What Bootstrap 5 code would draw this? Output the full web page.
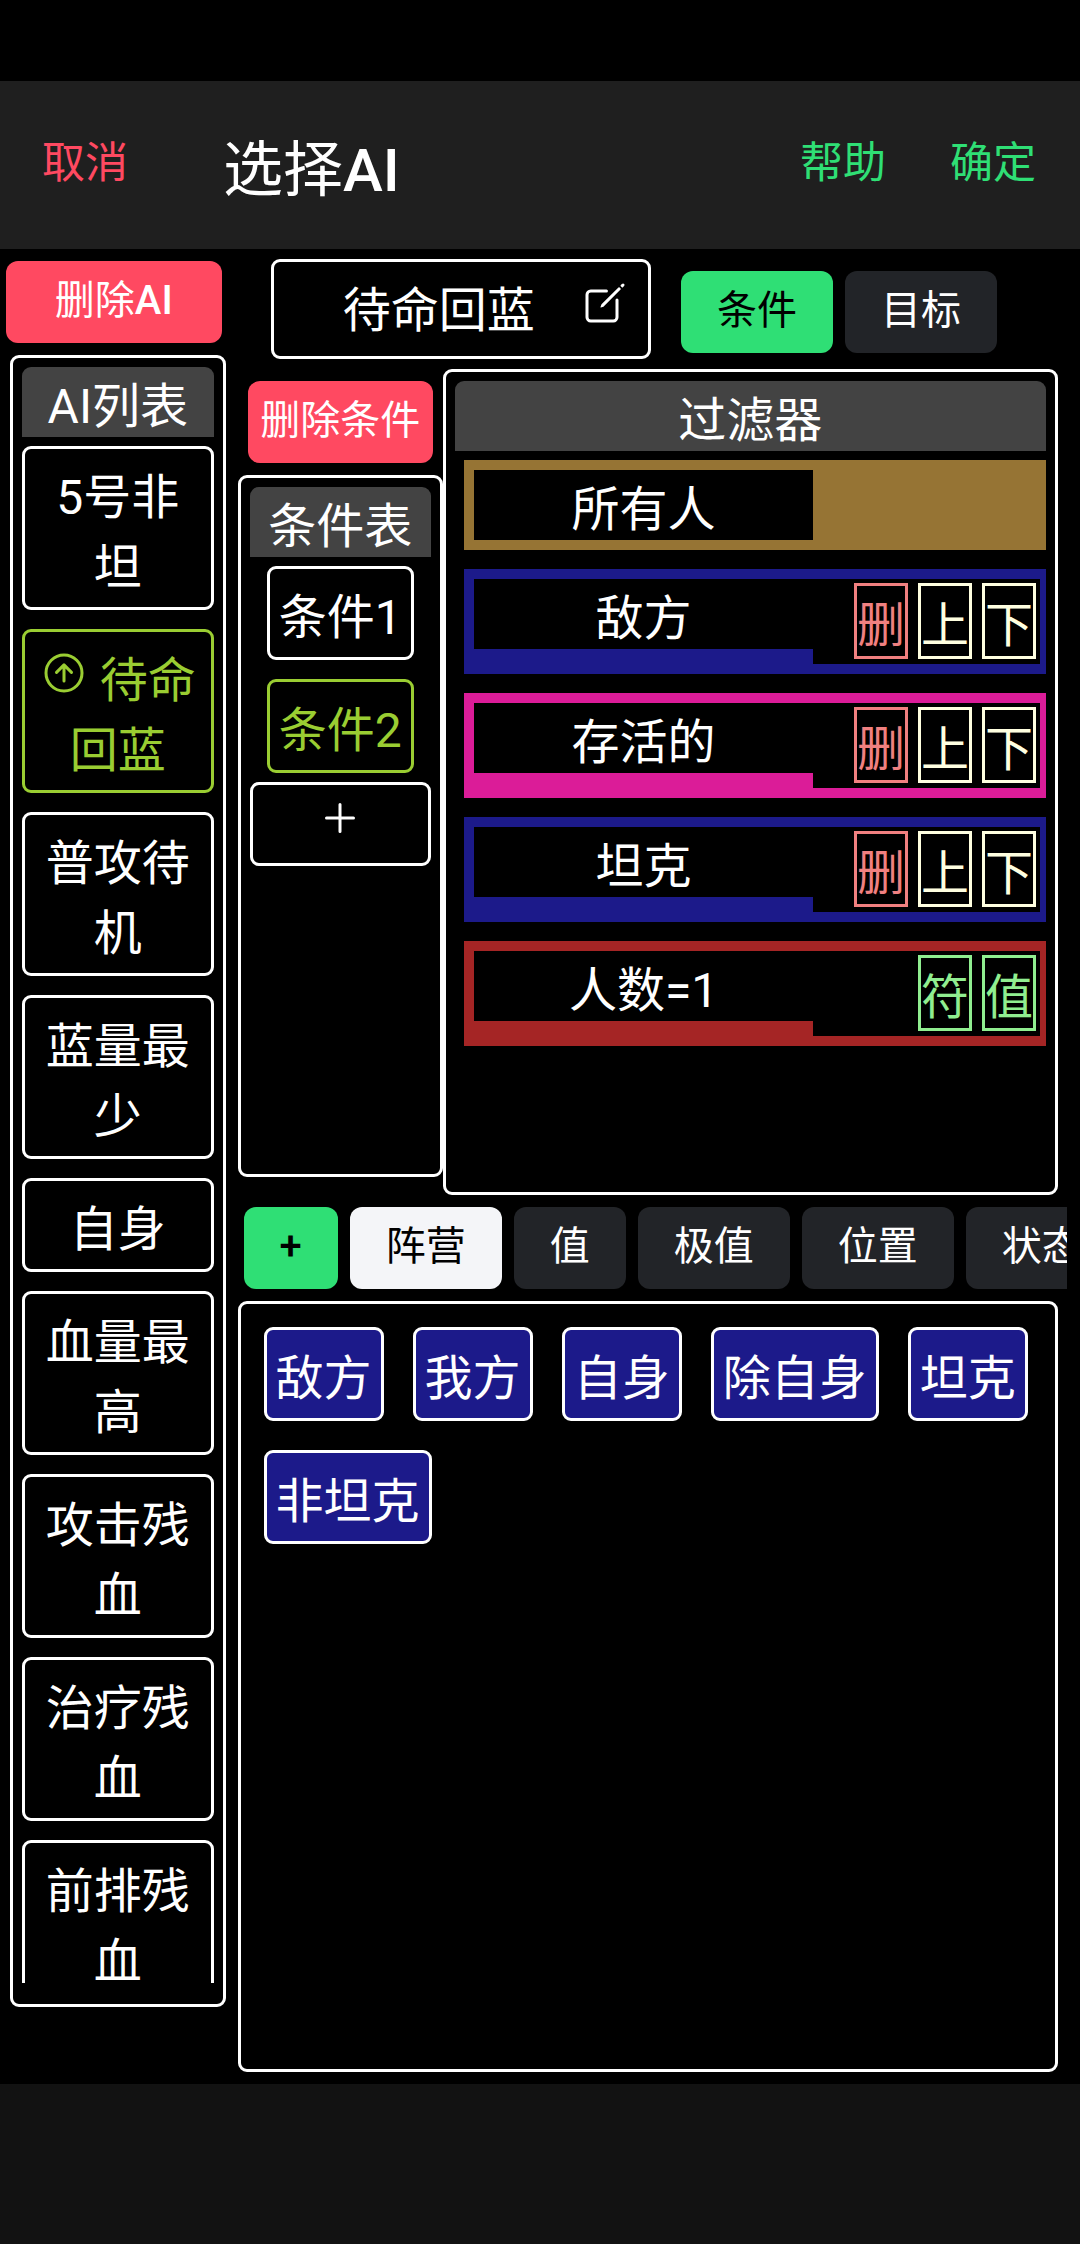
<!DOCTYPE html>
<html lang="zh-CN">
<head>
<meta charset="utf-8">
<meta name="viewport" content="width=device-width, initial-scale=1">
<title>选择AI</title>
<link href="https://cdn.jsdelivr.net/npm/bootstrap@5.3.0/dist/css/bootstrap.min.css" rel="stylesheet">
<script src="https://cdn.jsdelivr.net/npm/bootstrap@5.3.0/dist/js/bootstrap.bundle.min.js" defer></script>
<style>
  body { background: #000; color: #fff; font-family: Roboto, "Noto Sans CJK SC", sans-serif; font-size: 48px; line-height: normal; }
  .status-strip { height: 81px; }
  .top-bar { background: #1f1f1f; height: 168px; padding: 0 44px 0 42px; }
  .top-bar h1 { font-size: 60px; line-height: normal; margin-left: 95px; padding-bottom: 2px; }
  .bar-actions { gap: 64px; }
  .bar-link { --bs-btn-padding-x: 0px; --bs-btn-padding-y: 0px; --bs-btn-font-size: 43px; --bs-btn-border-width: 0px; line-height: 50px; margin-bottom: 4px; }
  .tint-danger, .tint-danger:hover { color: #ff4961; }
  .tint-success, .tint-success:hover { color: #2fdf75; }
  .latin-strong { font-weight: 500; }
  .bottom-strip { background: #121212; height: 160px; }

  .solid-btn { --bs-btn-padding-x: 36px; --bs-btn-padding-y: 0px; --bs-btn-font-size: 40px; --bs-btn-border-width: 0px; --bs-btn-border-radius: 12px; height: 82px; padding-bottom: 3px; flex-shrink: 0; white-space: nowrap; color: #fff; }
  .solid-red, .solid-red:hover { background: #ff4961; color: #fff; }
  .solid-green, .solid-green:hover { background: #2fdf75; color: #000; }
  .solid-light, .solid-light:hover { background: #f4f5f8; color: #000; }
  .solid-dark, .solid-dark:hover { background: #222428; color: #fff; }
  .narrow-btn { --bs-btn-padding-x: 8px; }

  .frame { border: 3px solid #fff; border-radius: 9px; }
  .frame-btn { display: block; background: #000; color: #fff; padding: 9px; line-height: normal; text-align: center; }
  .frame-btn.is-chosen { border-color: #9acd32; color: #9acd32; }
  .panel-title { background: #434343; border-radius: 9px 9px 0 0; font-size: 48px; font-weight: 400; line-height: normal; margin: 0 0 9px; text-align: center; flex-shrink: 0; }
  .ion { width: 48px; height: 48px; fill: none; stroke: currentColor; stroke-width: 32; stroke-linecap: round; stroke-linejoin: round; vertical-align: baseline; }
  .item-stack { gap: 19px; }

  .side-col { flex: 0 0 22%; padding: 12px 12px 0 10px; }
  .side-col > .solid-btn { margin: 0 4px 12px -4px; }
  .ai-panel { height: calc(100vh - 592px); padding: 9px 9px 21px; }
  .main-col { min-width: 0; padding: 10px 0 12px; }
  .name-row { padding-left: 33px; gap: 30px; margin-bottom: 10px; }
  .name-btn { width: 47%; height: 100px; padding: 9px 19px 9px 23px; }
  .mode-tabs { margin-top: 12px; }
  .tabs-gap { gap: 12px; }
  .work-row { margin-right: 22px; min-height: 826px; }
  .cond-col { flex: 0 0 25%; padding: 12px 0 18px; }
  .cond-col > .solid-btn { margin: 0 10px 12px; }
  .inner-pad { padding: 9px; }
  .add-cond { margin-top: 9px; padding-bottom: 21px; }

  .rule-list { gap: 19px; margin-left: 9px; margin-top: 1px; }
  .rule { padding: 10px 6px 10px 10px; }
  .rule-name { flex: 0 0 60%; background: #000; }
  .rule-tools { gap: 10px; padding: 4px 4px 5px 0; background: #000; }
  .tool-btn { width: 54px; padding: 0; background: #000; border: 3px solid currentColor; line-height: normal; }
  .tool-del { color: #f08080; }
  .tool-move { color: #ffffe0; }
  .tool-set { color: #90ee90; }
  .rule-gold { background: #967434; }
  .rule-blue { background: #1c1a8a; }
  .rule-pink { background: #db1c98; }
  .rule-red { background: #a52525; }

  .tab-strip { margin: 12px 13px 12px 0; padding-left: 6px; }
  .chip-panel { margin-right: 22px; padding: 23px; gap: 29px; }
  .chip-panel .frame-btn { background: #1c1a8a; }
</style>
</head>
<body class="d-flex flex-column min-vh-100">
<div class="status-strip flex-shrink-0"></div>
<header class="top-bar d-flex align-items-center flex-shrink-0">
  <button type="button" class="btn bar-link tint-danger">取消</button>
  <h1 class="mb-0 fw-normal">选择<span class="latin-strong">AI</span></h1>
  <div class="bar-actions ms-auto d-flex">
    <button type="button" class="btn bar-link tint-success">帮助</button>
    <button type="button" class="btn bar-link tint-success">确定</button>
  </div>
</header>

<main class="d-flex flex-grow-1">
  <aside class="side-col d-flex flex-column">
    <button type="button" class="btn solid-btn solid-red narrow-btn">删除<span class="latin-strong">AI</span></button>
    <section class="frame ai-panel">
      <div class="h-100 overflow-hidden">
        <h2 class="panel-title">AI列表</h2>
        <div class="d-flex flex-column item-stack">
          <button type="button" class="frame frame-btn">5号非坦</button>
          <button type="button" class="frame frame-btn is-chosen"><svg class="ion" viewBox="0 0 512 512" aria-hidden="true"><circle cx="256" cy="256" r="192"/><path d="M176 249.4L256 170l80 79.4M256 181v161"/></svg> 待命回蓝</button>
          <button type="button" class="frame frame-btn">普攻待机</button>
          <button type="button" class="frame frame-btn">蓝量最少</button>
          <button type="button" class="frame frame-btn">自身</button>
          <button type="button" class="frame frame-btn">血量最高</button>
          <button type="button" class="frame frame-btn">攻击残血</button>
          <button type="button" class="frame frame-btn">治疗残血</button>
          <button type="button" class="frame frame-btn">前排残血</button>
        </div>
      </div>
    </section>
  </aside>

  <div class="main-col flex-grow-1 d-flex flex-column">
    <div class="name-row d-flex">
      <button type="button" class="frame frame-btn name-btn d-flex align-items-start">
        <span class="flex-grow-1">待命回蓝</span>
        <svg class="ion mt-2" viewBox="0 0 512 512" aria-hidden="true"><path d="M384 224v184a40 40 0 01-40 40H104a40 40 0 01-40-40V168a40 40 0 0140-40h167.48"/><path fill="currentColor" stroke="none" d="M459.94 53.25a16.06 16.06 0 00-23.22-.56L424.35 65a8 8 0 000 11.31l11.34 11.32a8 8 0 0011.34 0l12.06-12c6.1-6.09 6.67-16.01.85-22.38zM399.34 90L218.82 270.2a9 9 0 00-2.31 3.93L208.16 299a3.91 3.91 0 004.86 4.86l24.85-8.35a9 9 0 003.93-2.31L422 112.66a9 9 0 000-12.66l-9.95-10a9 9 0 00-12.71 0z"/></svg>
      </button>
      <div class="mode-tabs d-flex tabs-gap align-self-start">
        <button type="button" class="btn solid-btn solid-green">条件</button>
        <button type="button" class="btn solid-btn solid-dark">目标</button>
      </div>
    </div>

    <div class="work-row d-flex">
      <div class="cond-col d-flex flex-column">
        <button type="button" class="btn solid-btn solid-red narrow-btn">删除条件</button>
        <section class="frame inner-pad flex-grow-1">
          <h2 class="panel-title">条件表</h2>
          <div class="d-flex flex-column align-items-center item-stack">
            <button type="button" class="frame frame-btn">条件1</button>
            <button type="button" class="frame frame-btn is-chosen">条件2</button>
          </div>
          <button type="button" class="frame frame-btn add-cond w-100" aria-label="添加条件"><svg class="ion d-block mx-auto" viewBox="0 0 512 512" aria-hidden="true"><path d="M256 112v288M400 256H112"/></svg></button>
        </section>
      </div>

      <section class="frame inner-pad flex-grow-1">
        <h2 class="panel-title">过滤器</h2>
        <div class="rule-list d-flex flex-column">
          <div class="rule rule-gold d-flex align-items-start">
            <div class="rule-name text-center">所有人</div>
          </div>
          <div class="rule rule-blue d-flex align-items-start">
            <div class="rule-name text-center">敌方</div>
            <div class="rule-tools d-flex flex-grow-1 justify-content-end">
              <button type="button" class="tool-btn tool-del">删</button>
              <button type="button" class="tool-btn tool-move">上</button>
              <button type="button" class="tool-btn tool-move">下</button>
            </div>
          </div>
          <div class="rule rule-pink d-flex align-items-start">
            <div class="rule-name text-center">存活的</div>
            <div class="rule-tools d-flex flex-grow-1 justify-content-end">
              <button type="button" class="tool-btn tool-del">删</button>
              <button type="button" class="tool-btn tool-move">上</button>
              <button type="button" class="tool-btn tool-move">下</button>
            </div>
          </div>
          <div class="rule rule-blue d-flex align-items-start">
            <div class="rule-name text-center">坦克</div>
            <div class="rule-tools d-flex flex-grow-1 justify-content-end">
              <button type="button" class="tool-btn tool-del">删</button>
              <button type="button" class="tool-btn tool-move">上</button>
              <button type="button" class="tool-btn tool-move">下</button>
            </div>
          </div>
          <div class="rule rule-red d-flex align-items-start">
            <div class="rule-name text-center">人数=1</div>
            <div class="rule-tools d-flex flex-grow-1 justify-content-end">
              <button type="button" class="tool-btn tool-set">符</button>
              <button type="button" class="tool-btn tool-set">值</button>
            </div>
          </div>
        </div>
      </section>
    </div>

    <nav class="tab-strip tabs-gap d-flex overflow-hidden flex-shrink-0" aria-label="筛选类别">
      <button type="button" class="btn solid-btn solid-green latin-strong">+</button>
      <button type="button" class="btn solid-btn solid-light">阵营</button>
      <button type="button" class="btn solid-btn solid-dark">值</button>
      <button type="button" class="btn solid-btn solid-dark">极值</button>
      <button type="button" class="btn solid-btn solid-dark">位置</button>
      <button type="button" class="btn solid-btn solid-dark">状态</button>
    </nav>

    <section class="frame chip-panel d-flex flex-wrap align-content-start flex-grow-1">
      <button type="button" class="frame frame-btn">敌方</button>
      <button type="button" class="frame frame-btn">我方</button>
      <button type="button" class="frame frame-btn">自身</button>
      <button type="button" class="frame frame-btn">除自身</button>
      <button type="button" class="frame frame-btn">坦克</button>
      <button type="button" class="frame frame-btn">非坦克</button>
    </section>
  </div>
</main>
<footer class="bottom-strip flex-shrink-0"></footer>
</body>
</html>
